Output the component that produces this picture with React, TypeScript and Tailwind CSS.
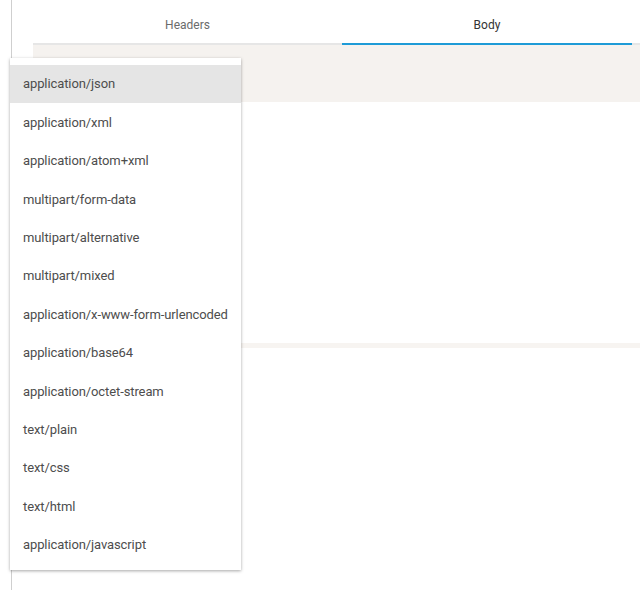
const types = [
  "application/json",
  "application/xml",
  "application/atom+xml",
  "multipart/form-data",
  "multipart/alternative",
  "multipart/mixed",
  "application/x-www-form-urlencoded",
  "application/base64",
  "application/octet-stream",
  "text/plain",
  "text/css",
  "text/html",
  "application/javascript",
];

export default function App() {
  return (
    <div className="relative w-[640px] h-[590px] bg-white overflow-hidden" style={{ fontFamily: "Roboto, 'Liberation Sans', sans-serif" }}>
      <div className="flex h-full">
        <div className="w-[12px] shrink-0 border-r border-[#cfcfcf]" />
        <div className="flex-1 pl-[21px]">
          {/* tabs */}
          <div className="flex h-[45px] border-b-2 border-[#e6e6e6]">
            <button className="w-[309px] flex items-center justify-center pt-[7px] text-xs text-[#6b6b6b]">Headers</button>
            <button className="w-[290px] flex items-center justify-center pt-[7px] text-xs text-[#333] border-b-2 border-[#1e9bd7] -mb-[2px]">Body</button>
          </div>
          <div className="h-[57px] bg-[#f5f2ef]" />
          <div className="h-[241px]" />
          <div className="h-[5px] bg-[#f7f4f1]" />
        </div>
      </div>

      {/* content-type dropdown */}
      <div className="absolute left-[10px] top-[58px] w-[231px] bg-white pt-[7px] pb-[6px] shadow-[0_1px_3px_rgba(0,0,0,0.35)]">
        {types.map((t, i) => (
          <div
            key={t}
            className={`h-[38.4px] flex items-center pl-[13px] text-[13px] tracking-[-0.1px] whitespace-nowrap text-[#4d4d4d] ${i === 0 ? "bg-[#e5e5e5]" : ""}`}
          >
            {t}
          </div>
        ))}
      </div>
    </div>
  );
}
